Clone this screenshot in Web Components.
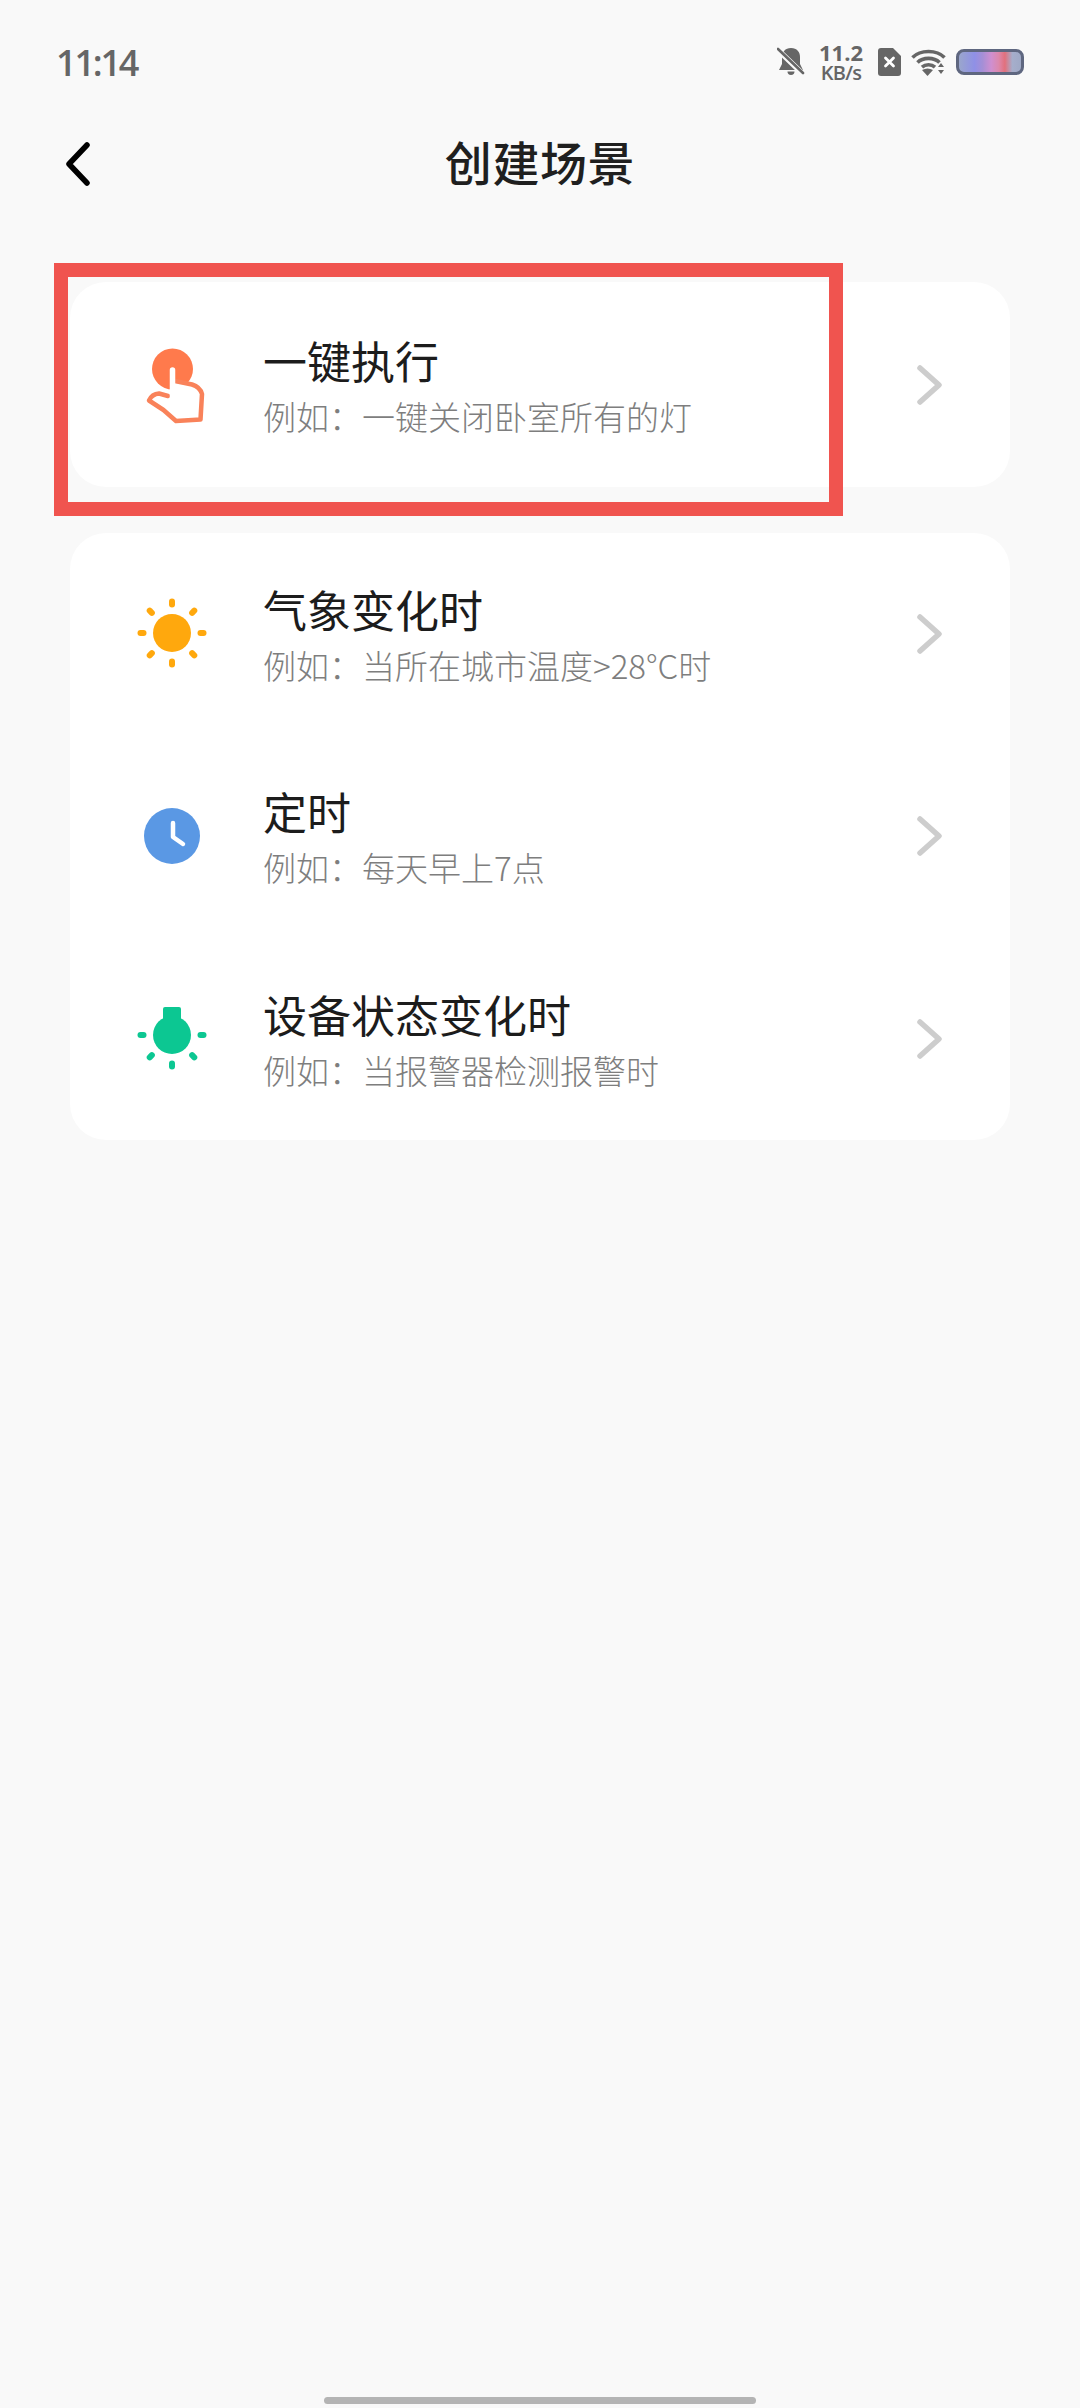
<!DOCTYPE html>
<html lang="zh">
<head>
<meta charset="utf-8">
<title>创建场景</title>
<style>
  html, body { margin: 0; background: #f9f9f9; }
  body {
    display: flex;
    flex-direction: column;
    height: 2408px;
    overflow: hidden;
    font-family: "Noto Sans CJK SC", "Noto Sans", sans-serif;
  }
  scene-list { flex: 1; }
  svg { display: block; }
</style>
</head>
<body>
  <status-bar></status-bar>
  <nav-bar>创建场景</nav-bar>
  <scene-list>
    <scene-card>
      <scene-row tall>
        <svg slot="icon" width="80" height="80" viewBox="0 0 80 80">
          <circle cx="40.5" cy="24" r="20.5" fill="#ff7a4c"/>
          <path d="M43 36 L60 39.5 Q68 42 70 49 L68.5 74.5 L44 76 L31.5 65 L17 55.5 Q20 49 27 48.5 L36 51" fill="#fff" stroke="#f9825a" stroke-width="4.5" stroke-linejoin="round" stroke-linecap="round"/>
          <path d="M40.5 25 V52" stroke="#fff" stroke-width="5.5" stroke-linecap="round"/>
        </svg>
        <span slot="title">一键执行</span>
        <span slot="sub">例如：一键关闭卧室所有的灯</span>
      </scene-row>
      <highlight-box></highlight-box>
    </scene-card>
    <scene-card class="second">
      <scene-row>
        <svg slot="icon" width="80" height="80" viewBox="0 0 80 80" fill="#ffa80d">
          <circle cx="40" cy="39" r="19"/>
          <rect x="37" y="4.5" width="6" height="9" rx="3"/>
          <rect x="37" y="4.5" width="6" height="9" rx="3" transform="rotate(45 40 39)"/>
          <rect x="37" y="4.5" width="6" height="9" rx="3" transform="rotate(90 40 39)"/>
          <rect x="37" y="4.5" width="6" height="9" rx="3" transform="rotate(135 40 39)"/>
          <rect x="37" y="4.5" width="6" height="9" rx="3" transform="rotate(180 40 39)"/>
          <rect x="37" y="4.5" width="6" height="9" rx="3" transform="rotate(225 40 39)"/>
          <rect x="37" y="4.5" width="6" height="9" rx="3" transform="rotate(270 40 39)"/>
          <rect x="37" y="4.5" width="6" height="9" rx="3" transform="rotate(315 40 39)"/>
        </svg>
        <span slot="title">气象变化时</span>
        <span slot="sub">例如：当所在城市温度&gt;28°C时</span>
      </scene-row>
      <scene-row>
        <svg slot="icon" width="80" height="80" viewBox="0 0 80 80">
          <circle cx="40" cy="40" r="28" fill="#5a98e4"/>
          <path d="M41 27 V41 L51 48" fill="none" stroke="#fff" stroke-width="4.5" stroke-linecap="round" stroke-linejoin="round"/>
        </svg>
        <span slot="title">定时</span>
        <span slot="sub">例如：每天早上7点</span>
      </scene-row>
      <scene-row>
        <svg slot="icon" width="80" height="80" viewBox="0 0 80 80" fill="#0cc792">
          <circle cx="40" cy="36" r="19"/>
          <path d="M31 10 Q31 8 33 8 H47 Q49 8 49 10 V24 H31 Z"/>
          <rect x="37" y="1.5" width="6" height="9" rx="3" transform="rotate(90 40 36)"/>
          <rect x="37" y="1.5" width="6" height="9" rx="3" transform="rotate(135 40 36)"/>
          <rect x="37" y="1.5" width="6" height="9" rx="3" transform="rotate(180 40 36)"/>
          <rect x="37" y="1.5" width="6" height="9" rx="3" transform="rotate(225 40 36)"/>
          <rect x="37" y="1.5" width="6" height="9" rx="3" transform="rotate(270 40 36)"/>
        </svg>
        <span slot="title">设备状态变化时</span>
        <span slot="sub">例如：当报警器检测报警时</span>
      </scene-row>
    </scene-card>
  </scene-list>
  <home-indicator></home-indicator>

<script>
class StatusBar extends HTMLElement {
  connectedCallback() {
    const shadow = this.attachShadow({ mode: "open" });
    shadow.innerHTML = `
      <style>
        :host {
          display: flex;
          align-items: center;
          justify-content: space-between;
          height: 124px;
          padding: 0 56px 0 56px;
          color: #666;
          font-family: "Open Sans", "Noto Sans", sans-serif;
        }
        .time { font-size: 36px; font-weight: 600; letter-spacing: -2.2px; }
        .icons { display: flex; align-items: center; }
        svg { display: block; }
        .speed {
          display: flex;
          flex-direction: column;
          align-items: center;
          margin: 0 15px 0 14px;
        }
        .speed b { font-size: 22px; line-height: 21px; font-weight: 700; }
        .speed span { font-size: 20px; line-height: 19px; font-weight: 600; letter-spacing: -0.8px; }
        .battery {
          box-sizing: border-box;
          width: 68px;
          height: 26px;
          margin-left: 10px;
          border: 3px solid #5f6780;
          border-radius: 8px;
          background: linear-gradient(90deg, #9aa6cc 0%, #8f90e6 25%, #a58fd6 38%, #cf8fd0 52%, #dc88ac 64%, #e2707c 74%, #a6aecb 86%, #9fa9c6 100%);
        }
      </style>
      <span class="time">11:14</span>
      <div class="icons">
        <svg width="28" height="30" viewBox="0 0 28 30">
          <path d="M14 1 C20 1 23 5 23 10 V17 L26 23 H2 L5 17 V10 C5 5 8 1 14 1 Z" fill="#666"/>
          <path d="M10.5 24.5 H17.5 A3.5 3.5 0 0 1 10.5 24.5 Z" fill="#666"/>
          <path d="M1 3 L27 28" stroke="#f9f9f9" stroke-width="5.5"/>
          <path d="M1 2 L26 26" stroke="#666" stroke-width="2.6" stroke-linecap="round"/>
        </svg>
        <div class="speed"><b>11.2</b><span>KB/s</span></div>
        <svg width="23" height="28" viewBox="0 0 23 28">
          <path d="M3 0 H15 L23 8 V25 Q23 28 20 28 H3 Q0 28 0 25 V3 Q0 0 3 0 Z" fill="#666"/>
          <path d="M7.5 10 L15.5 18 M15.5 10 L7.5 18" stroke="#fff" stroke-width="2.8" stroke-linecap="round"/>
        </svg>
        <svg width="35" height="27" viewBox="0 0 35 27" style="margin-left:10px">
          <g fill="none" stroke="#666" stroke-width="3.6">
            <path d="M1.5 8.5 C9.5 0.5 25.5 0.5 33.5 8.5"/>
            <path d="M6.5 13.5 C12 8 23 8 28.5 13.5"/>
            <path d="M11 18.2 C14.5 15 20.5 15 24 18.2"/>
          </g>
          <path d="M12 21 Q17.5 18 23 21 L17.5 27 Z" fill="#666" transform="translate(-1 0)"/>
          <path d="M27 18 L30 14 L33 18 Z M27 21 H33 L30 25 Z" fill="#666"/>
        </svg>
        <div class="battery"></div>
      </div>
    `;
  }
}

class NavBar extends HTMLElement {
  connectedCallback() {
    const shadow = this.attachShadow({ mode: "open" });
    shadow.innerHTML = `
      <style>
        :host {
          display: flex;
          align-items: center;
          justify-content: center;
          position: relative;
          box-sizing: border-box;
          height: 78px;
          padding-bottom: 5px;
          color: #1f1f1f;
          font-size: 47px;
          font-weight: 500;
          letter-spacing: 0.6px;
        }
        svg { position: absolute; left: 63px; top: 18px; }
      </style>
      <svg width="30" height="44" viewBox="0 0 30 44">
        <path d="M24 3 L6 22 L24 41" fill="none" stroke="#000" stroke-width="5.5" stroke-linecap="round" stroke-linejoin="round"/>
      </svg>
      <slot></slot>
    `;
  }
}

class SceneList extends HTMLElement {
  connectedCallback() {
    const shadow = this.attachShadow({ mode: "open" });
    shadow.innerHTML = `
      <style>
        :host {
          display: flex;
          flex-direction: column;
          gap: 46px;
          padding: 80px 70px 0;
        }
      </style>
      <slot></slot>
    `;
  }
}

class SceneCard extends HTMLElement {
  connectedCallback() {
    const shadow = this.attachShadow({ mode: "open" });
    shadow.innerHTML = `
      <style>
        :host {
          display: block;
          position: relative;
          background: #fff;
          border-radius: 36px;
        }
      </style>
      <slot></slot>
    `;
  }
}

class SceneRow extends HTMLElement {
  connectedCallback() {
    const shadow = this.attachShadow({ mode: "open" });
    shadow.innerHTML = `
      <style>
        :host {
          display: flex;
          align-items: center;
          height: 202.33px;
          padding: 0 66px 0 62px;
        }
        :host([tall]) { height: 205px; }
        .icon { width: 80px; flex: none; }
        .text {
          flex: 1;
          display: flex;
          flex-direction: column;
          margin-left: 51px;
          padding-top: 3px;
        }
        .title { font-size: 44px; line-height: 60px; color: #1c1c1c; }
        .sub { font-size: 33px; line-height: 53px; color: #7e7e7e; font-weight: 300; }
        svg { display: block; }
      </style>
      <div class="icon"><slot name="icon"></slot></div>
      <div class="text">
        <div class="title"><slot name="title"></slot></div>
        <div class="sub"><slot name="sub"></slot></div>
      </div>
      <svg width="28" height="44" viewBox="0 0 28 44">
        <path d="M4 5 L23 22 L4 39" fill="none" stroke="#cdcdcd" stroke-width="5.5" stroke-linecap="round" stroke-linejoin="round"/>
      </svg>
    `;
  }
}

class HighlightBox extends HTMLElement {
  connectedCallback() {
    const shadow = this.attachShadow({ mode: "open" });
    shadow.innerHTML = `
      <style>
        :host {
          position: absolute;
          left: -16px;
          top: -19px;
          box-sizing: border-box;
          width: 789px;
          height: 253px;
          border: 14px solid #f0544f;
          pointer-events: none;
        }
      </style>
    `;
  }
}

class HomeIndicator extends HTMLElement {
  connectedCallback() {
    const shadow = this.attachShadow({ mode: "open" });
    shadow.innerHTML = `
      <style>
        :host {
          display: block;
          width: 432px;
          height: 7px;
          margin: 0 auto 4px;
          border-radius: 4px;
          background: #b4b4b4;
        }
      </style>
    `;
  }
}

customElements.define("status-bar", StatusBar);
customElements.define("nav-bar", NavBar);
customElements.define("scene-list", SceneList);
customElements.define("scene-card", SceneCard);
customElements.define("scene-row", SceneRow);
customElements.define("highlight-box", HighlightBox);
customElements.define("home-indicator", HomeIndicator);
</script>
</body>
</html>
